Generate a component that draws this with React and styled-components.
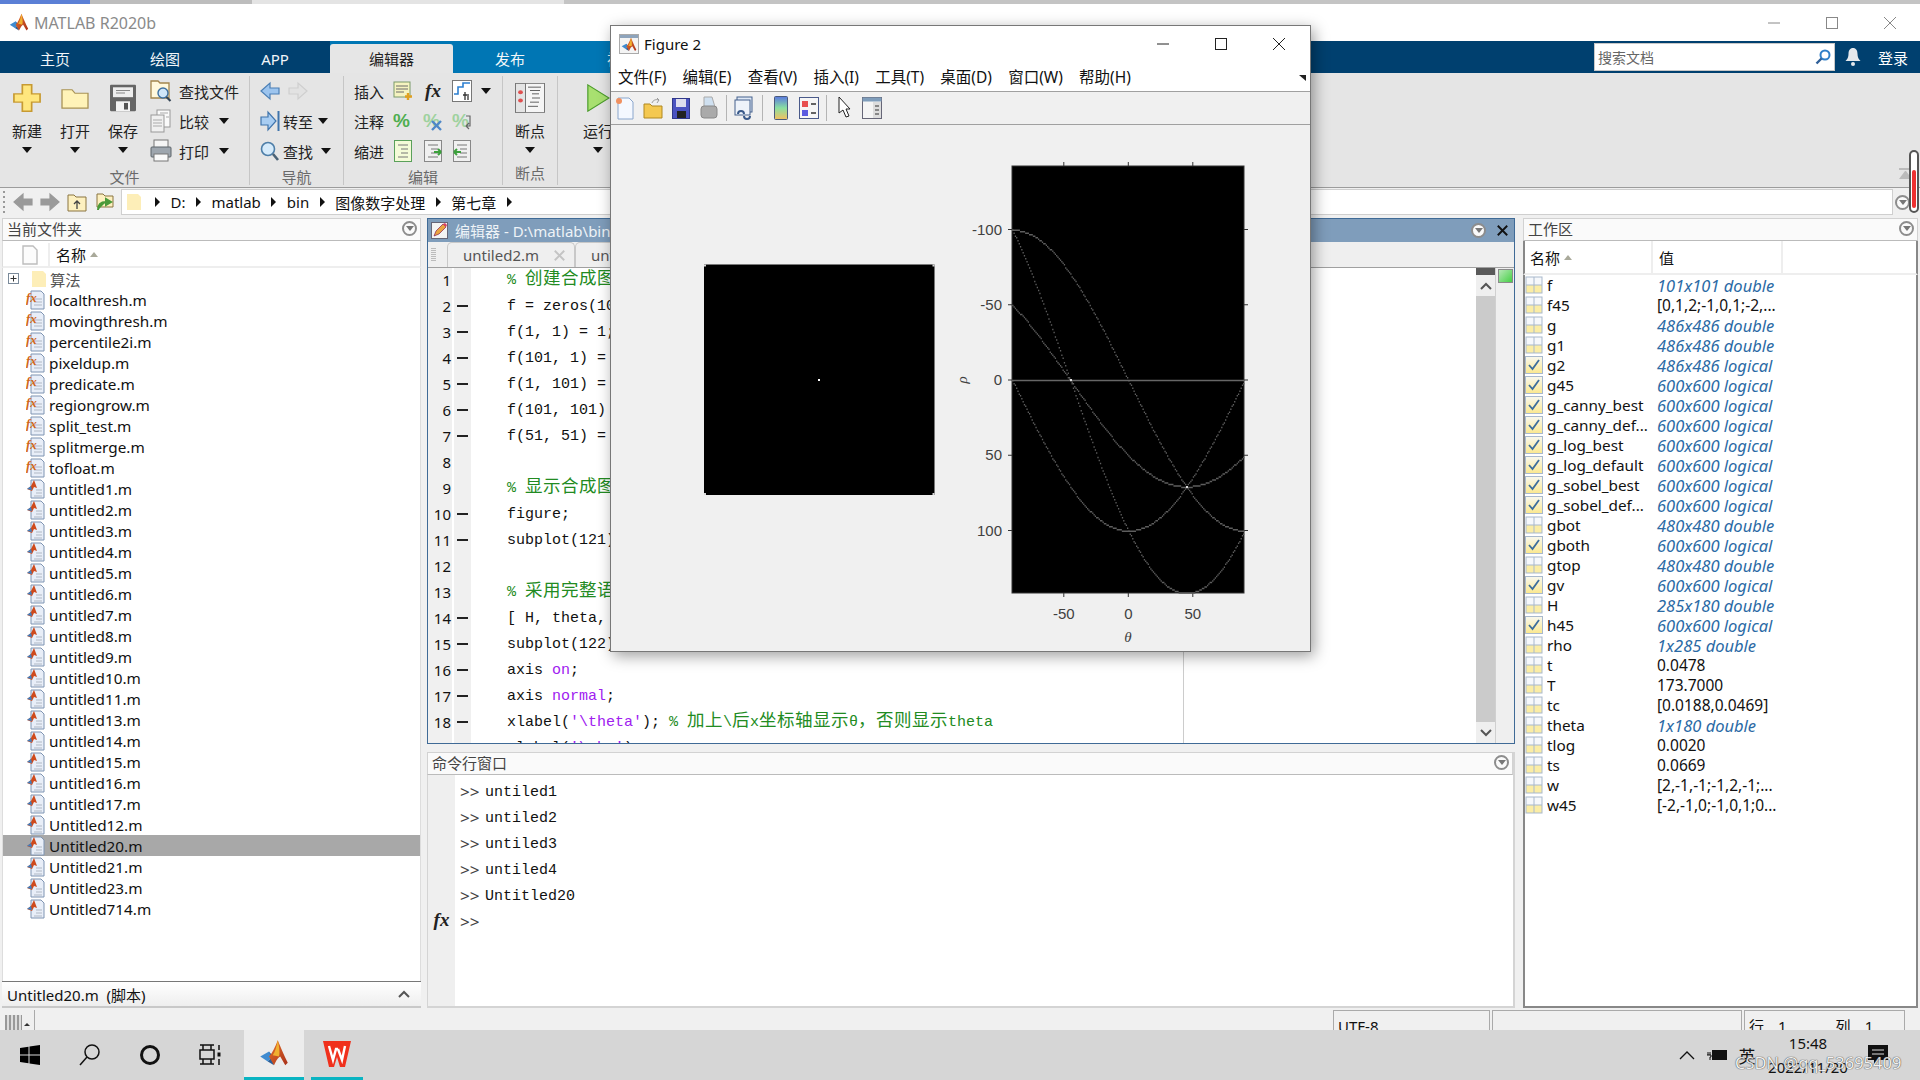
import React from "react";
import styled, { createGlobalStyle } from "styled-components";

const UI = `"Noto Sans", "Noto Sans CJK SC", sans-serif`;
const MONO = `"Liberation Mono", "Noto Sans CJK SC", monospace`;

const GlobalStyle = createGlobalStyle`
  html, body { margin: 0; padding: 0; width: 1920px; height: 1080px; overflow: hidden; }
  body { font-family: ${UI}; font-size: 15px; color: #111; }
  * { box-sizing: border-box; }
`;

const Page = styled.div`
  position: relative;
  width: 1920px;
  height: 1080px;
  display: flex;
  flex-direction: column;
  overflow: hidden;
  background: #f0f0f0;
`;

const BrowserStrip = styled.div`
  height: 4px;
  display: flex;
  background: #c4c4c4;
`;
const StripPart = styled.div`
  width: ${(p) => p.$w}px;
  background: ${(p) => p.$c};
`;

const TitleBar = styled.div`
  height: 37px;
  background: #fff;
  display: flex;
  align-items: center;
  padding-left: 9px;
`;
const TitleText = styled.span`
  margin-left: 5px;
  font-size: 16px;
  color: #8a8a8a;
`;
const WinButtons = styled.div`
  margin-left: auto;
  display: flex;
  padding-right: ${(p) => p.$pr ?? 1}px;
`;
const WinButton = styled.div`
  width: 58px;
  height: 30px;
  display: flex;
  align-items: center;
  justify-content: center;
`;

const TabBar = styled.div`
  height: 32px;
  display: flex;
  background: #00406f;
  padding-right: 5px;
`;
const TabGroup = styled.div`
  display: flex;
  height: 100%;
  width: ${(p) => p.$w}px;
  background: ${(p) => p.$c};
  padding-top: 3px;
`;
const Tab = styled.div`
  width: ${(p) => p.$w || 110}px;
  display: flex;
  align-items: center;
  justify-content: center;
  color: ${(p) => (p.$active ? "#222" : "#f2f6f9")};
  font-size: 15px;
  background: ${(p) => (p.$active ? "#e6e6e6" : "transparent")};
  border-radius: 3px 3px 0 0;
`;
const SearchBox = styled.div`
  margin-left: auto;
  margin-top: 2px;
  width: 241px;
  height: 28px;
  background: #fff;
  border: 1px solid #c8c8c8;
  display: flex;
  align-items: center;
  justify-content: space-between;
  padding: 0 3px 0 3px;
  color: #666;
  font-size: 14px;
`;
const SignIn = styled.div`
  color: #fff;
  font-size: 15px;
  width: 44px;
  display: flex;
  align-items: center;
  justify-content: center;
`;
const BellWrap = styled.div`
  width: 36px;
  display: flex;
  align-items: center;
  justify-content: center;
`;

const Ribbon = styled.div`
  height: 115px;
  display: flex;
  background: #e5e5e5;
  border-bottom: 1px solid #9c9c9c;
`;
const Group = styled.div`
  width: ${(p) => p.$w}px;
  flex: ${(p) => (p.$grow ? 1 : "none")};
  display: flex;
  flex-direction: column;
  border-right: ${(p) => (p.$grow ? "none" : "1px solid #c6c6c6")};
  margin: 3px 0 2px;
`;
const GroupBody = styled.div`
  flex: 1;
  display: flex;
  padding-left: ${(p) => p.$pad || 0}px;
`;
const GroupLabel = styled.div`
  height: 23px;
  text-align: center;
  color: #6a6a6a;
  font-size: 15px;
  line-height: 23px;
`;
const BigButton = styled.div`
  width: ${(p) => p.$w || 48}px;
  display: flex;
  flex-direction: column;
  align-items: center;
  font-size: 15px;
  color: #222;
  padding-top: 2px;
`;
const BigIcon = styled.div`
  height: 40px;
  display: flex;
  align-items: center;
  margin-bottom: 1px;
`;
const BigText = styled.div`
  height: 24px;
  line-height: 24px;
  margin-bottom: 4px;
`;
const RowStack = styled.div`
  display: flex;
  flex-direction: column;
  padding-left: ${(p) => p.$pad || 0}px;
`;
const SmallRow = styled.div`
  height: 30px;
  display: flex;
  align-items: center;
  font-size: 15px;
  color: #222;
  gap: ${(p) => p.$gap ?? 4}px;
`;
const EditRow = styled.div`
  height: 30px;
  display: grid;
  grid-template-columns: 34px 30px 30px 28px 20px;
  align-items: center;
  justify-items: center;
  font-size: 15px;
  color: #222;
  padding-left: 10px;
  & > span:first-child { justify-self: start; white-space: nowrap; }
`;
const Caret = styled.i`
  display: inline-block;
  width: 0;
  height: 0;
  margin-left: ${(p) => p.$ml || 0}px;
  border-left: 5px solid transparent;
  border-right: 5px solid transparent;
  border-top: 6px solid #111;
`;
const CaretRight = styled.i`
  display: inline-block;
  width: 0;
  height: 0;
  border-top: 5px solid transparent;
  border-bottom: 5px solid transparent;
  border-left: 5px solid #111;
`;
const CaretUp = styled.i`
  display: inline-block;
  width: 0;
  height: 0;
  border-left: 4px solid transparent;
  border-right: 4px solid transparent;
  border-bottom: 5px solid #a9a99a;
  margin-left: 4px;
`;

const AddressBar = styled.div`
  height: 28px;
  display: flex;
  align-items: center;
  background: #f0f0f0;
  padding-left: 3px;
`;
const Grip = styled.div`
  width: 2px;
  height: 22px;
  background: repeating-linear-gradient(to bottom, #999 0 2px, transparent 2px 5px);
  margin-right: 8px;
`;
const NavIcons = styled.div`
  display: flex;
  align-items: center;
  gap: 7px;
  width: 108px;
`;
const PathBox = styled.div`
  width: 1772px;
  height: 26px;
  background: #fff;
  border: 1px solid #cfcfcf;
  display: flex;
  align-items: center;
  padding-left: 4px;
  font-size: 15px;
`;
const Crumbs = styled.div`
  display: flex;
  align-items: center;
  margin-left: 13px;
  gap: 10.5px;
`;
const RoundMenu = styled.div`
  width: 15px;
  height: 15px;
  border-radius: 50%;
  border: 2px solid #8d8d8d;
  background: #fafafa;
  display: flex;
  align-items: center;
  justify-content: center;
  flex: none;
  margin-left: ${(p) => p.$ml || 0}px;
  &::after {
    content: "";
    border-left: 4px solid transparent;
    border-right: 4px solid transparent;
    border-top: 5px solid #777;
  }
`;

const Main = styled.div`
  height: 792px;
  display: flex;
  padding: 2px 4px 0 2px;
  gap: 7px;
`;
const SidePanel = styled.div`
  width: ${(p) => p.$w}px;
  flex: none;
  display: flex;
  flex-direction: column;
`;
const PanelHead = styled.div`
  height: 23px;
  flex: none;
  background: #fafafa;
  border: 1px solid #d2d2d2;
  border-bottom: 1px solid #bbb;
  display: flex;
  align-items: center;
  justify-content: space-between;
  padding: 0 3px 2px 4px;
  color: #444;
  font-size: 15px;
`;

const ColumnHead = styled.div`
  height: 27px;
  flex: none;
  display: flex;
  align-items: center;
  background: #fff;
  border-bottom: 2px solid #eee;
  border-left: 1px solid #ddd;
  border-right: 1px solid #ddd;
  padding-top: 2px;
`;
const IconCol = styled.div`
  width: 47px;
  height: 100%;
  display: flex;
  align-items: center;
  justify-content: center;
  padding-left: 8px;
  border-right: 2px solid #eee;
`;
const NameCol = styled.div`
  padding-left: 6px;
  font-size: 15px;
  display: flex;
  align-items: center;
`;
const FileList = styled.div`
  flex: 1;
  background: #fff;
  border-left: 1px solid #ddd;
  border-right: 1px solid #ddd;
  overflow: hidden;
`;
const FileRow = styled.div`
  height: 21px;
  display: flex;
  align-items: center;
  padding-left: ${(p) => (p.$folder ? 5 : 23)}px;
  background: ${(p) => (p.$selected ? "#a8a8a8" : "transparent")};
  color: ${(p) => (p.$folder ? "#555" : "#111")};
  font-size: 15.3px;
  gap: 3px;
`;
const TreeGap = styled.span`
  width: 6px;
`;
const DetailBar = styled.div`
  height: 27px;
  flex: none;
  border-top: 1px solid #777;
  border-bottom: 2px solid #c8c8c8;
  background: linear-gradient(#fff, #eee);
  display: flex;
  align-items: center;
  justify-content: space-between;
  padding: 0 11px 0 5px;
  font-size: 15px;
`;

const MiddleColumn = styled.div`
  width: 1088px;
  flex: none;
  display: flex;
  flex-direction: column;
  margin-left: -1px;
  margin-right: 1px;
`;
const EditorPane = styled.div`
  height: 526px;
  flex: none;
  display: flex;
  flex-direction: column;
  border: 1px solid #3f6a96;
  overflow: hidden;
`;
const EditorHead = styled.div`
  height: 23px;
  flex: none;
  background: #7f9dbb;
  display: flex;
  align-items: center;
  color: #eef3f7;
  font-size: 15px;
  padding-left: 3px;
  gap: 7px;
`;
const EditorHeadRight = styled.div`
  margin-left: auto;
  display: flex;
  align-items: center;
  gap: 11px;
  padding-right: 6px;
`;
const TabStrip = styled.div`
  height: 26px;
  flex: none;
  display: flex;
  align-items: flex-end;
  background: #efefef;
  border-bottom: 1px solid #a0a0a0;
  padding-left: 3px;
`;
const TabGrip = styled.div`
  width: 5px;
  height: 14px;
  margin: 0 11px 5px 0;
  background: repeating-linear-gradient(to bottom, #bbb 0 1px, transparent 1px 2px);
`;
const FileTab = styled.div`
  width: 128px;
  height: 25px;
  display: flex;
  align-items: center;
  justify-content: space-between;
  padding: 0 9px 0 15px;
  border: 1px solid #c8c8c8;
  border-bottom: none;
  border-radius: 5px 5px 0 0;
  color: #555;
  font-size: 15px;
`;
const CodeArea = styled.div`
  flex: 1;
  display: flex;
  background: #fff;
  overflow: hidden;
`;
const LineNumbers = styled.div`
  width: 24px;
  flex: none;
  background: #f0f0f0;
  margin-right: 2px;
  margin-top: -1px;
`;
const LineNo = styled.div`
  height: 26px;
  line-height: 26px;
  text-align: right;
  font-size: 15px;
  padding-right: 1px;
`;
const DashColumn = styled.div`
  width: 17px;
  flex: none;
  background: #f0f0f0;
  margin-top: -1px;
`;
const Dash = styled.div`
  height: 26px;
  display: flex;
  align-items: center;
  justify-content: center;
  &::after {
    content: "";
    display: ${(p) => (p.$on ? "block" : "none")};
    width: 11px;
    height: 1.5px;
    background: #222;
  }
`;
const CodeColumn = styled.div`
  flex: 1;
  position: relative;
  padding-left: 36px;
`;
const CodeLine = styled.div`
  height: 26px;
  line-height: 26px;
  font-family: ${MONO};
  font-size: 15px;
  white-space: pre;
  color: #111;
`;
const Cm = styled.span`
  color: #228b22;
`;
const Zh = styled.span`
  font-family: "Noto Sans CJK SC", sans-serif;
  font-size: 17.5px;
  letter-spacing: 0.5px;
  line-height: 1;
`;
const Str = styled.span`
  color: #a020f0;
`;
const LimitLine = styled.div`
  position: absolute;
  left: 712px;
  top: 0;
  bottom: 0;
  width: 1px;
  background: #ccc;
`;
const ScrollTrack = styled.div`
  width: 20px;
  flex: none;
  background: #efefef;
  display: flex;
  flex-direction: column;
  align-items: center;
  border-right: 1px solid #d0d0d0;
  &::before {
    content: "";
    display: block;
    width: 100%;
    height: 7px;
    background: #5a5a5a;
    flex: none;
  }
`;
const ScrollArrow = styled.div`
  height: 21px;
  flex: none;
  display: flex;
  align-items: center;
  justify-content: center;
`;
const ScrollThumb = styled.div`
  width: 19px;
  flex: 1;
  background: #cbcbcb;
`;
const MarkerColumn = styled.div`
  width: 18px;
  flex: none;
  background: #efefef;
  padding: 1px 1px 0 2px;
`;
const GreenBox = styled.div`
  height: 14px;
  border: 1px solid #8a8a8a;
  background: linear-gradient(135deg, #b6e8b6, #46d046);
`;

const CommandPane = styled.div`
  margin-top: 8px;
  flex: 1;
  display: flex;
  flex-direction: column;
  border-right: 2px solid #d4d4d4;
  border-bottom: 2px solid #d4d4d4;
`;
const CommandBody = styled.div`
  flex: 1;
  display: flex;
  background: #fff;
  border-left: 1px solid #d4d4d4;
`;
const CommandGutter = styled.div`
  width: 27px;
  background: #efefef;
  display: flex;
  align-items: flex-end;
  justify-content: center;
  padding-bottom: 75px;
  font-family: "Liberation Serif", serif;
  font-style: italic;
  font-weight: 700;
  font-size: 19px;
  color: #222;
`;
const CommandLines = styled.div`
  padding: 5px 0 0 5px;
`;
const CommandLine = styled.div`
  height: 26px;
  line-height: 26px;
  font-family: ${MONO};
  font-size: 15px;
  white-space: pre;
  color: #111;
  display: flex;
`;
const Prompt = styled.span`
  width: 25px;
  color: #444;
  font-size: 17px;
  font-family: "Noto Sans", sans-serif;
  line-height: 24px;
`;

const WsHead = styled.div`
  height: 34px;
  flex: none;
  display: flex;
  background: #fff;
  border-left: 2px solid #888;
  border-right: 2px solid #888;
  border-bottom: 2px solid #eee;
  font-size: 15px;
`;
const WsHeadCell = styled.div`
  width: ${(p) => p.$w}px;
  display: flex;
  align-items: center;
  padding-left: ${(p) => p.$pad}px;
  border-right: 2px solid #eee;
`;
const WsList = styled.div`
  flex: 1;
  background: #fff;
  border: 2px solid #888;
  border-top: none;
  overflow: hidden;
`;
const WsRow = styled.div`
  height: 20px;
  display: flex;
  align-items: center;
  font-size: 15.3px;
`;
const WsName = styled.div`
  width: 110px;
  margin-left: 4px;
  white-space: nowrap;
  overflow: hidden;
`;
const WsValue = styled.div`
  white-space: nowrap;
  color: ${(p) => (p.$meta ? "#2b6aa5" : "#111")};
  font-style: ${(p) => (p.$meta ? "italic" : "normal")};
  font-size: ${(p) => (p.$meta ? 16.5 : 15.5)}px;
`;

const StatusBar = styled.div`
  height: 22px;
  display: flex;
  background: #f0f0f0;
  padding: 2px 0 0 5px;
  font-size: 15px;
  overflow: hidden;
`;
const StatusGrip = styled.div`
  width: 17px;
  height: 20px;
  margin-top: 5px;
  background: repeating-linear-gradient(to right, #999 0 2px, #ddd 2px 4px);
`;
const StatusGripEnd = styled.div`
  width: 13px;
  flex: none;
  border-right: 1px solid #aaa;
  display: flex;
  align-items: flex-end;
  justify-content: center;
  padding: 0 3px 4px 0;
  &::after {
    content: "";
    border-left: 3px solid transparent;
    border-right: 3px solid transparent;
    border-bottom: 3px solid #333;
  }
`;
const StatusCell = styled.div`
  width: ${(p) => p.$w}px;
  height: 30px;
  margin-left: ${(p) => p.$ml || 0}px;
  border: 1px solid #aaa;
  border-bottom: none;
  padding-left: 4px;
  display: flex;
  gap: 14px;
  line-height: 30px;
`;
const StatusSpacer = styled.span`
  width: 21px;
`;

const Taskbar = styled.div`
  height: 50px;
  background: #d6d6d6;
  display: flex;
  align-items: center;
`;
const TaskIcon = styled.div`
  width: ${(p) => p.$w || 60}px;
  height: 100%;
  display: flex;
  align-items: center;
  justify-content: center;
  flex: none;
  background: ${(p) => (p.$active ? "#ececec" : "transparent")};
  border-bottom: ${(p) => (p.$open ? "3px solid #0ab4c2" : "none")};
  margin-left: ${(p) => p.$ml || 0}px;
`;
const Tray = styled.div`
  margin-left: auto;
  display: flex;
  align-items: center;
  height: 100%;
`;
const TrayItem = styled.div`
  width: ${(p) => p.$w}px;
  display: flex;
  align-items: center;
  justify-content: center;
  font-size: ${(p) => p.$fs || 15}px;
  color: #111;
`;
const Clock = styled.div`
  width: 92px;
  text-align: center;
  font-size: 15px;
  line-height: 24px;
  color: #111;
`;
const Watermark = styled.div`
  position: absolute;
  left: 1735px;
  top: 1051px;
  font-size: 16.5px;
  color: #f6f6f6;
  opacity: 0.85;
  text-shadow: 0 0 1px #333, 0 0 1px #333;
  white-space: nowrap;
`;
const FloatingPill = styled.div`
  position: absolute;
  left: 1909px;
  top: 150px;
  width: 10px;
  height: 63px;
  border: 2px solid #555;
  border-radius: 5px;
  background: #fff;
  padding-top: 18px;
  display: flex;
  justify-content: center;
  &::after {
    content: "";
    width: 4px;
    height: 38px;
    background: #ee3030;
    border-radius: 2px;
  }
`;
const CollapseArrow = styled.div`
  position: absolute;
  left: 1899px;
  top: 168px;
  width: 13px;
  height: 13px;
  border-top: 2px solid #bbb;
  &::after {
    content: "";
    display: block;
    margin-top: 1px;
    border-left: 6px solid transparent;
    border-right: 6px solid transparent;
    border-bottom: 8px solid #bbb;
  }
`;

const FigureWindow = styled.div`
  position: absolute;
  left: 610px;
  top: 25px;
  width: 701px;
  height: 627px;
  background: #f0f0f0;
  border: 1px solid #777;
  box-shadow: 3px 4px 14px rgba(0, 0, 0, 0.38);
  display: flex;
  flex-direction: column;
`;
const FigTitle = styled.div`
  height: 36px;
  background: #fff;
  display: flex;
  align-items: center;
  padding-left: 8px;
  gap: 5px;
  font-size: 15px;
  flex: none;
`;
const FigLogoFrame = styled.div`
  width: 20px;
  height: 20px;
  border: 1px solid #aaa;
  background: linear-gradient(#8ea4bc 0 3px, #f4f4f4 3px);
  display: flex;
  align-items: flex-end;
  justify-content: center;
`;
const FigMenu = styled.div`
  height: 30px;
  background: #fff;
  display: flex;
  align-items: center;
  padding-left: 7px;
  gap: 16.2px;
  font-size: 15.5px;
  border-bottom: 1px solid #a0a0a0;
  flex: none;
  position: relative;
`;
const DockArrow = styled.div`
  position: absolute;
  right: 4px;
  top: 13px;
  width: 7px;
  height: 6px;
  background: #222;
  clip-path: polygon(0 0, 100% 100%, 100% 0);
`;
const FigTools = styled.div`
  height: 33px;
  flex: none;
  background: #f0f0f0;
  display: flex;
  align-items: center;
  border-bottom: 1px solid #a0a0a0;
`;
const ToolSlot = styled.div`
  width: 28px;
  display: flex;
  justify-content: center;
`;
const ToolSep = styled.div`
  width: 1px;
  height: 26px;
  background: #b4b4b4;
  margin: 0 ${(p) => p.$m || 3}px;
`;
const ChartSvg = styled.svg`
  flex: 1;
  display: block;
  width: 100%;
  min-height: 0;
`;

/* ---------- drawings ---------- */

const Logo = ({ size = 20 }) => (
  <svg width={size} height={size} viewBox="0 0 24 24">
    <defs>
      <linearGradient id="peak" x1="0" y1="0" x2="1" y2="1">
        <stop offset="0" stopColor="#e8742a" />
        <stop offset="1" stopColor="#a9301a" />
      </linearGradient>
    </defs>
    <path d="M1 14 L8 10 L11 14 L7 18 Z" fill="#3f8bd0" />
    <path d="M8 10 L11 14 L7 18 L12 21 Z" fill="#2a5d96" />
    <path d="M15 1 C13 6 11 11 8 14 L12 21 C14 17 15 15 17 14 L21 21 L23 19 C20 13 17 6 15 1 Z" fill="url(#peak)" />
    <path d="M15 1 C14 6 13 10 11 13 L16 14 C17 11 16 5 15 1 Z" fill="#f0b030" />
  </svg>
);

const PlusIcon = () => (
  <svg width="28" height="28" viewBox="0 0 30 34" preserveAspectRatio="none">
    <path d="M10 1h10v11h9v10h-9v11H10V22H1V12h9z" fill="#ffe67e" stroke="#c79a32" strokeWidth="1.8" />
  </svg>
);
const FolderIcon = () => (
  <svg width="28" height="21" viewBox="0 0 28 24" preserveAspectRatio="none">
    <path d="M1 2h10l3 4h13v17H1z" fill="#fff3b8" stroke="#a99356" strokeWidth="1.3" />
  </svg>
);
const SaveIcon = () => (
  <svg width="28" height="28" viewBox="0 0 28 34" preserveAspectRatio="none">
    <rect x="1" y="1" width="26" height="32" rx="1" fill="#666" />
    <rect x="4" y="4" width="20" height="12" fill="#eee" />
    <path d="M7 8h14M7 11h9" stroke="#888" strokeWidth="1.3" />
    <rect x="7" y="21" width="14" height="12" fill="#f4f4f4" />
    <rect x="15" y="23" width="4" height="8" fill="#555" />
  </svg>
);
const FindFileIcon = () => (
  <svg width="22" height="24" viewBox="0 0 22 24">
    <path d="M1 2h7l2 2h9v15H1z" fill="#fff8dc" stroke="#a3854c" strokeWidth="1.3" />
    <circle cx="13" cy="14" r="5" fill="#cfe6f8" stroke="#3d6fa0" strokeWidth="1.4" />
    <path d="M16.500 18l4 4" stroke="#345" strokeWidth="2.2" />
  </svg>
);
const CompareIcon = () => (
  <svg width="22" height="24" viewBox="0 0 22 24">
    <rect x="7" y="1" width="13" height="17" fill="#fafafa" stroke="#999" />
    <rect x="1" y="6" width="13" height="17" fill="#f0f0f0" stroke="#999" />
    <path d="M3 11h9M3 14h9M3 17h9M10 4h8M16 8h3" stroke="#aaa" />
  </svg>
);
const PrintIcon = () => (
  <svg width="22" height="24" viewBox="0 0 22 24">
    <rect x="4" y="1" width="14" height="8" fill="#f5f5f5" stroke="#777" />
    <rect x="1" y="8" width="20" height="10" rx="1" fill="#9ea6ae" stroke="#5d646b" />
    <rect x="4" y="15" width="14" height="7" fill="#fafafa" stroke="#777" />
  </svg>
);
const FlipSvg = styled.svg`
  transform: ${(p) => (p.$flip ? "scaleX(-1)" : "none")};
`;
const ArrowIcon = ({ dir = "left", fill = "#9cc4ee", stroke = "#4b7fb5", size = 20 }) => (
  <FlipSvg width={size} height={size} viewBox="0 0 20 20" $flip={dir === "right"}>
    <path d="M1 10L10 2v5h9v6h-9v5z" fill={fill} stroke={stroke} strokeWidth="1.2" />
  </FlipSvg>
);
const GotoIcon = () => (
  <svg width="20" height="22" viewBox="0 0 20 22">
    <path d="M1 7h7V2l8 9-8 9v-5H1z" fill="#a8cdf2" stroke="#3f74ac" strokeWidth="1.2" />
    <path d="M18.500 1v20" stroke="#3f74ac" strokeWidth="2" />
  </svg>
);
const LensIcon = () => (
  <svg width="20" height="22" viewBox="0 0 20 22">
    <circle cx="8" cy="9" r="6.500" fill="#d6ebfb" stroke="#4d7ea8" strokeWidth="1.6" />
    <path d="M13 14l5 6" stroke="#4a6275" strokeWidth="2.6" />
  </svg>
);
const NoteIcon = () => (
  <svg width="20" height="20" viewBox="0 0 20 20">
    <rect x="1" y="1" width="16" height="15" fill="#f5f3c0" stroke="#7a9a6a" />
    <path d="M3 5h12M3 8h12M3 11h8" stroke="#6a6a6a" />
    <path d="M15 12v7M12 15.500h7" stroke="#e0a020" strokeWidth="2.4" />
  </svg>
);
const FxGlyph = styled.span`
  font-family: "Liberation Serif", serif;
  font-style: italic;
  font-weight: 700;
  font-size: 19px;
  color: #222;
`;
const FlowIcon = () => (
  <svg width="20" height="22" viewBox="0 0 20 22">
    <rect x="0.5" y="0.5" width="19" height="21" fill="#fff" stroke="#777" />
    <path d="M2 14h4V7h5V3h7" stroke="#2d7fd0" strokeWidth="1.6" fill="none" />
    <path d="M13 12v8M11 15h4M16 14v6" stroke="#333" strokeWidth="1.3" fill="none" />
  </svg>
);
const PercentIcon = ({ variant }) => (
  <svg width="20" height="22" viewBox="0 0 20 22">
    <text x="0" y="17" fontFamily="Liberation Sans, sans-serif" fontSize="19" fontWeight="700" fill={variant ? "#9fd29f" : "#4fae4f"}>
      %
    </text>
    {variant === "x" && <path d="M9 11l9 9M18 11l-9 9" stroke="#4f88c8" strokeWidth="2.4" />}
    {variant === "w" && <path d="M14 6h4v10h-4M14 16l3-3M14 16l3 3" stroke="#666" strokeWidth="1.2" fill="none" />}
  </svg>
);
const IndentIcon = ({ variant }) => (
  <svg width="18" height="22" viewBox="0 0 18 22">
    <rect x="0.5" y="0.5" width="17" height="21" fill={variant ? "#f0f0f0" : "#f4fbd8"} stroke={variant ? "#888" : "#5aa05a"} />
    <path d="M4 5h10M7 9h7M7 13h7M4 17h10" stroke="#777" />
    {variant === "l" && <path d="M1 12h7M1 12l3-3M1 12l3 3" stroke="#3ca03c" strokeWidth="2" />}
    {variant === "r" && <path d="M17 12h-7M17 12l-3-3M17 12l-3 3" stroke="#3ca03c" strokeWidth="2" />}
  </svg>
);
const BreakpointIcon = () => (
  <svg width="30" height="30" viewBox="0 0 30 36" preserveAspectRatio="none">
    <rect x="0.5" y="0.5" width="29" height="35" fill="#f5f5f5" stroke="#777" />
    <rect x="0.5" y="0.5" width="10" height="35" fill="#e4e4e4" stroke="#777" />
    <circle cx="5.5" cy="11" r="2.4" fill="#e05050" />
    <circle cx="5.5" cy="21" r="2.4" fill="#e05050" />
    <path d="M13 5h13M15 9h10M17 13h7M17 18h8M15 23h9M13 28h10" stroke="#555" />
  </svg>
);
const RunIcon = () => (
  <svg width="24" height="28" viewBox="0 0 26 34" preserveAspectRatio="none">
    <path d="M2 1l23 16L2 33z" fill="#a8e070" stroke="#4c9c2c" strokeWidth="1.3" />
  </svg>
);
const UpFolderIcon = () => (
  <svg width="20" height="20" viewBox="0 0 20 20">
    <path d="M1 3h6l2 2h10v14H1z" fill="#fdf0c0" stroke="#8a7440" />
    <path d="M10 17V9M7 12l3-3 3 3" stroke="#444" strokeWidth="1.3" fill="none" />
  </svg>
);
const BackFolderIcon = () => (
  <svg width="20" height="20" viewBox="0 0 20 20">
    <path d="M3 2h6l2 2h8v11H3z" fill="#fdf0c0" stroke="#8a7440" />
    <path d="M4 18c0-6 3-8 8-8M12 7v6l5-3z" stroke="#4a9a3a" strokeWidth="2" fill="#4a9a3a" />
  </svg>
);
const PageIcon = () => (
  <svg width="16" height="20" viewBox="0 0 16 20">
    <path d="M1 1h10l4 4v14H1z" fill="#fcfcfc" stroke="#bdbdbd" strokeWidth="1.4" />
  </svg>
);
const TreePlus = () => (
  <svg width="11" height="11" viewBox="0 0 11 11">
    <rect x="0.5" y="0.5" width="10" height="10" fill="#fff" stroke="#7a8a9a" />
    <path d="M2.500 5.500h6M5.500 2.500v6" stroke="#333" />
  </svg>
);
const SmallFolder = () => (
  <svg width="16" height="18" viewBox="0 0 16 18">
    <path d="M1 1h11l3 3v13H1z" fill="#fdeeb8" />
  </svg>
);
const FxFile = () => (
  <svg width="20" height="20" viewBox="0 0 20 20">
    <path d="M5 1h10l3 3v15H5z" fill="#e8eef8" stroke="#7f94b2" />
    <path d="M8 9h8M8 12h8M8 15h8" stroke="#b0b8c4" />
    <text x="0" y="12" fontFamily="Liberation Serif, serif" fontStyle="italic" fontWeight="700" fontSize="13" fill="#d0681c">
      fx
    </text>
  </svg>
);
const ScriptFile = () => (
  <svg width="20" height="20" viewBox="0 0 20 20">
    <path d="M5 1h10l3 3v15H5z" fill="#e8eef8" stroke="#7f94b2" />
    <path d="M10 11h6M10 14h6M8 17h8" stroke="#b0b8c4" />
    <path d="M1 10l4-3 3-6 3 8-3-1-2 4z" fill="#cf4a1c" />
    <path d="M1 10l4-3 1 4z" fill="#3f7fc0" />
  </svg>
);
const GridIcon = () => (
  <svg width="18" height="18" viewBox="0 0 18 18">
    <rect x="0.5" y="0.5" width="17" height="17" fill="#a9b9cc" />
    <rect x="1.5" y="1.5" width="7" height="7" fill="#f6f8fb" />
    <rect x="9.5" y="1.5" width="7" height="7" fill="#f6f8fb" />
    <rect x="1.5" y="9.5" width="7" height="7" fill="#fbeda5" />
    <rect x="9.5" y="9.5" width="7" height="7" fill="#fbeda5" />
  </svg>
);
const CheckIcon = () => (
  <svg width="18" height="18" viewBox="0 0 18 18">
    <defs>
      <linearGradient id="chk" x1="0" y1="0" x2="0" y2="1">
        <stop offset="0" stopColor="#f8f8f0" />
        <stop offset="1" stopColor="#fbe88e" />
      </linearGradient>
    </defs>
    <rect x="0.5" y="0.5" width="17" height="17" fill="url(#chk)" stroke="#a9b9cc" />
    <path d="M4 9l3.500 4L14 4" stroke="#3c6d9c" strokeWidth="1.8" fill="none" />
  </svg>
);
const XMark = ({ size = 14, color = "#888", width = 1 }) => (
  <svg width={size} height={size} viewBox="0 0 14 14">
    <path d="M1 1l12 12M13 1L1 13" stroke={color} strokeWidth={width} />
  </svg>
);
const MinMark = ({ color = "#888" }) => (
  <svg width="14" height="14" viewBox="0 0 14 14">
    <path d="M1 7h12" stroke={color} strokeWidth="1" />
  </svg>
);
const MaxMark = ({ color = "#888" }) => (
  <svg width="14" height="14" viewBox="0 0 14 14">
    <rect x="1.5" y="1.5" width="11" height="11" fill="none" stroke={color} strokeWidth="1" />
  </svg>
);
const Chevron = ({ up, color = "#555" }) => (
  <svg width="12" height="8" viewBox="0 0 12 8">
    <path d={up ? "M1 7l5-5 5 5" : "M1 1l5 5 5-5"} fill="none" stroke={color} strokeWidth="2" />
  </svg>
);
const SearchGlass = () => (
  <svg width="16" height="16" viewBox="0 0 16 16">
    <circle cx="10" cy="6" r="4.500" fill="#fff" stroke="#2f7fc8" strokeWidth="2" />
    <path d="M6.500 9.500L1.500 14.500" stroke="#2f5f98" strokeWidth="2.4" />
  </svg>
);
const Bell = () => (
  <svg width="16" height="20" viewBox="0 0 16 20">
    <path d="M8 1c3 0 4.500 2.500 4.500 6 0 3 1 5 3 7H.5c2-2 3-4 3-7 0-3.500 1.500-6 4.500-6z" fill="#e4e8ec" />
    <circle cx="8" cy="17" r="2" fill="#e4e8ec" />
  </svg>
);
const Pencil = () => (
  <svg width="17" height="17" viewBox="0 0 17 17">
    <rect x="0.5" y="0.5" width="16" height="16" fill="#f4f4f4" stroke="#667" />
    <path d="M3 14l2-5 7-7 3 3-7 7z" fill="#e8a440" stroke="#704" strokeWidth="0.6" />
    <path d="M12 2l3 3 1-2-2-2z" fill="#d84060" />
  </svg>
);
const ColorbarIcon = () => (
  <svg width="14" height="24" viewBox="0 0 14 24">
    <defs>
      <linearGradient id="cbar" x1="0" y1="0" x2="0" y2="1">
        <stop offset="0" stopColor="#5a78e0" />
        <stop offset="0.5" stopColor="#8ae0a0" />
        <stop offset="1" stopColor="#f4c060" />
      </linearGradient>
    </defs>
    <rect x="0.5" y="0.5" width="13" height="23" rx="1" fill="url(#cbar)" stroke="#4a5a7a" />
  </svg>
);
const LegendIcon = () => (
  <svg width="20" height="22" viewBox="0 0 20 22">
    <rect x="0.5" y="0.5" width="19" height="21" fill="#f6f6f6" stroke="#4a5a8a" />
    <rect x="3" y="4" width="6" height="6" fill="#e85050" />
    <rect x="3" y="13" width="6" height="6" fill="#5a5ae0" />
    <path d="M12 7h5M12 16h5" stroke="#333" strokeWidth="1.5" />
  </svg>
);
const NewFileIcon = () => (
  <svg width="20" height="24" viewBox="0 0 20 24">
    <path d="M3 2h11l4 4v17H3z" fill="#f4f8ff" stroke="#8aa6cc" />
    <circle cx="4" cy="5" r="3" fill="#f09060" />
  </svg>
);
const OpenIcon = () => (
  <svg width="20" height="22" viewBox="0 0 20 22">
    <path d="M1 7h6l2 2h10v12H1z" fill="#f4c850" stroke="#b08820" />
    <path d="M9 6c1-3 4-4 7-3M14 1l2 2-2 3" stroke="#999" fill="none" />
  </svg>
);
const FloppyIcon = () => (
  <svg width="18" height="22" viewBox="0 0 18 22">
    <rect x="0.5" y="1.5" width="17" height="20" fill="#4a52c0" stroke="#30388a" />
    <rect x="4" y="2" width="10" height="8" fill="#dde" />
    <rect x="5" y="14" width="9" height="7" fill="#222" />
  </svg>
);
const GreyPrintIcon = () => (
  <svg width="18" height="24" viewBox="0 0 18 24">
    <path d="M4 1h8l3 10H4z" fill="#cfe0f0" stroke="#aaa" />
    <rect x="1" y="10" width="16" height="12" rx="3" fill="#aaa" stroke="#888" />
  </svg>
);
const LinkIcon = () => (
  <svg width="20" height="24" viewBox="0 0 20 24">
    <rect x="3" y="1" width="15" height="15" fill="#dfe8f6" stroke="#44608c" />
    <rect x="1" y="4" width="15" height="15" fill="#eef3fa" stroke="#44608c" />
    <path d="M4 18a3 3 0 016 0M10 20a3 3 0 006 0" stroke="#3a5a8a" strokeWidth="2" fill="none" />
  </svg>
);
const PointerIcon = () => (
  <svg width="14" height="24" viewBox="0 0 14 24">
    <path d="M2 1v16l4-3 3 7 3-1-3-7h4z" fill="#fff" stroke="#222" />
  </svg>
);
const PanelIcon = () => (
  <svg width="20" height="22" viewBox="0 0 20 22">
    <rect x="0.5" y="0.5" width="19" height="21" fill="#f5f5f5" stroke="#667" />
    <rect x="0.5" y="0.5" width="19" height="4" fill="#7f9dbb" />
    <rect x="11" y="5" width="8" height="16" fill="#ddd" />
    <path d="M13 9h4M13 13h4M13 17h4" stroke="#333" />
  </svg>
);
const WindowsLogo = () => (
  <svg width="20" height="20" viewBox="0 0 20 20">
    <path d="M0 3l8.500-1.200V9.500H0zM9.500 1.600L20 0v9.500H9.500zM0 10.500h8.500v7.700L0 17zM9.500 10.500H20V20L9.500 18.400z" fill="#000" />
  </svg>
);
const TaskSearch = () => (
  <svg width="22" height="24" viewBox="0 0 22 24">
    <circle cx="13" cy="9" r="7" fill="none" stroke="#111" strokeWidth="1.5" />
    <path d="M8 14L1 22" stroke="#111" strokeWidth="1.5" />
  </svg>
);
const CortanaRing = () => (
  <svg width="22" height="22" viewBox="0 0 22 22">
    <circle cx="11" cy="11" r="8.500" fill="none" stroke="#111" strokeWidth="3" />
  </svg>
);
const TaskView = () => (
  <svg width="22" height="22" viewBox="0 0 22 22">
    <path d="M1 1h14M1 6h14v9H1zM1 20h14M4 1v5M12 1v5M4 15v5M12 15v5M20 1v5M20 15v6" stroke="#111" strokeWidth="1.5" fill="none" />
    <rect x="18.500" y="8.500" width="3" height="4" fill="#111" />
  </svg>
);
const WpsLogo = () => (
  <svg width="32" height="30" viewBox="0 0 32 30">
    <path d="M2 2h28l-6 26h-5l-3-10-3 10H8z" fill="#f0301c" />
    <path d="M8 7l4 14 3-11h2M24 7l-3 14-4-11" fill="none" stroke="#fff" strokeWidth="2.4" />
  </svg>
);
const BatteryIcon = () => (
  <svg width="20" height="14" viewBox="0 0 20 14">
    <rect x="5.500" y="2.500" width="14" height="9" fill="#111" stroke="#111" />
    <path d="M1 4v3M3 4v3M0 7h4v2H3v3" stroke="#111" fill="none" />
  </svg>
);
const TrayUp = () => (
  <svg width="16" height="10" viewBox="0 0 16 10">
    <path d="M1 9l7-7 7 7" fill="none" stroke="#111" strokeWidth="1.3" />
  </svg>
);
const NotifyIcon = () => (
  <svg width="20" height="20" viewBox="0 0 20 20">
    <path d="M0 0h20v15H10l-4 4v-4H0z" fill="#111" />
    <path d="M4 5h12M4 9h12" stroke="#ddd" />
  </svg>
);

/* ---------- data ---------- */

const files = [
  ["localthresh.m", "fx"], ["movingthresh.m", "fx"], ["percentile2i.m", "fx"], ["pixeldup.m", "fx"],
  ["predicate.m", "fx"], ["regiongrow.m", "fx"], ["split_test.m", "fx"], ["splitmerge.m", "fx"], ["tofloat.m", "fx"],
  ...[1, 2, 3, 4, 5, 6, 7, 8, 9, 10, 11, 13, 14, 15, 16, 17].map((n) => [`untitled${n}.m`, "s"]),
  ...[12, 20, 21, 23, 714].map((n) => [`Untitled${n}.m`, "s"]),
];

const vars = [
  ["f", "101x101 double", "g", 1], ["f45", "[0,1,2;-1,0,1;-2,...", "g", 0], ["g", "486x486 double", "g", 1],
  ["g1", "486x486 double", "g", 1], ["g2", "486x486 logical", "c", 1], ["g45", "600x600 logical", "c", 1],
  ["g_canny_best", "600x600 logical", "c", 1], ["g_canny_def...", "600x600 logical", "c", 1],
  ["g_log_best", "600x600 logical", "c", 1], ["g_log_default", "600x600 logical", "c", 1],
  ["g_sobel_best", "600x600 logical", "c", 1], ["g_sobel_def...", "600x600 logical", "c", 1],
  ["gbot", "480x480 double", "g", 1], ["gboth", "600x600 logical", "c", 1], ["gtop", "480x480 double", "g", 1],
  ["gv", "600x600 logical", "c", 1], ["H", "285x180 double", "g", 1], ["h45", "600x600 logical", "c", 1],
  ["rho", "1x285 double", "g", 1], ["t", "0.0478", "g", 0], ["T", "173.7000", "g", 0],
  ["tc", "[0.0188,0.0469]", "g", 0], ["theta", "1x180 double", "g", 1], ["tlog", "0.0020", "g", 0],
  ["ts", "0.0669", "g", 0], ["w", "[2,-1,-1;-1,2,-1;...", "g", 0], ["w45", "[-2,-1,0;-1,0,1;0...", "g", 0],
];

const code = [
  [1, 0, <Cm>% <Zh>创建合成图像</Zh></Cm>],
  [2, 1, "f = zeros(101, 101);"],
  [3, 1, "f(1, 1) = 1;"],
  [4, 1, "f(101, 1) = 1;"],
  [5, 1, "f(1, 101) = 1;"],
  [6, 1, "f(101, 101) = 1;"],
  [7, 1, "f(51, 51) = 1;"],
  [8, 0, ""],
  [9, 0, <Cm>% <Zh>显示合成图像</Zh></Cm>],
  [10, 1, "figure;"],
  [11, 1, "subplot(121), imshow(f);"],
  [12, 0, ""],
  [13, 0, <Cm>% <Zh>采用完整语法</Zh></Cm>],
  [14, 1, "[ H, theta, rho ] = hough(f);"],
  [15, 1, "subplot(122), imshow(H);"],
  [16, 1, <>axis <Str>on</Str>;</>],
  [17, 1, <>axis <Str>normal</Str>;</>],
  [18, 1, <>xlabel(<Str>'\theta'</Str>); <Cm>% <Zh>加上</Zh>\<Zh>后</Zh>x<Zh>坐标轴显示</Zh>θ<Zh>，否则显示</Zh>theta</Cm></>],
  [19, 1, <>ylabel(<Str>'\rho'</Str>);</>],
];

const commands = ["untiled1", "untiled2", "untiled3", "untiled4", "Untitled20", ""];

const menu = ["文件(F)", "编辑(E)", "查看(V)", "插入(I)", "工具(T)", "桌面(D)", "窗口(W)", "帮助(H)"];

const px = (t) => 1128.3 + t * 1.29;
const py = (r) => 380 + r * 1.505;
// one accumulator cell per theta column, so steep parts come out dotted
const curve = (a, b) => {
  let d = "";
  for (let t = -90; t <= 89; t += 1) {
    const rad = (t * Math.PI) / 180;
    const r = Math.round(a * Math.cos(rad) + b * Math.sin(rad));
    d += `M${px(t).toFixed(2)} ${py(r).toFixed(2)}h1.29v1.5h-1.29z`;
  }
  return d;
};

const HoughChart = () => (
  <ChartSvg viewBox="611 125 699 525" preserveAspectRatio="xMinYMin meet">
    <rect x="704" y="264.500" width="230.500" height="230.500" fill="#000" />
    <rect x="818" y="379" width="2" height="2" fill="#fff" />
    <path d="M704 264.500h2v2h-2zM932.500 264.500h2v2h-2zM704 493h2v2h-2zM932.500 493h2v2h-2z" fill="#d8d8d8" />
    <rect x="1012" y="166" width="232" height="427" fill="#000" stroke="#333" />
    {[-50, 0, 50].map((t) => (
      <g key={t}>
        <path d={`M${px(t)} 162V166M${px(t)} 593V597`} stroke="#333" />
        <text x={px(t)} y="619" textAnchor="middle" fontFamily="Liberation Sans, sans-serif" fontSize="15" fill="#404040">{t}</text>
      </g>
    ))}
    {[-100, -50, 0, 50, 100].map((r) => (
      <g key={r}>
        <path d={`M1008 ${py(r)}H1012M1244 ${py(r)}H1248`} stroke="#333" />
        <text x="1002" y={py(r) + 5} textAnchor="end" fontFamily="Liberation Sans, sans-serif" fontSize="15" fill="#404040">{r}</text>
      </g>
    ))}
    <g fill="#5e5e5e">
      <path d={curve(100, 0)} />
      <path d={curve(0, 100)} />
      <path d={curve(100, 100)} />
      <path d={curve(50, 50)} />
    </g>
    <path d="M1012 380.500H1244" stroke="#666" strokeWidth="1.6" />
    <rect x="1070" y="379" width="2" height="2" fill="#ddd" />
    <rect x="1186" y="486" width="2" height="2" fill="#ddd" />
    <text x="1128" y="642" textAnchor="middle" fontFamily="Liberation Serif, serif" fontStyle="italic" fontSize="15" fill="#404040">θ</text>
    <text x="0" y="0" transform="translate(967 380) rotate(-90)" textAnchor="middle" fontFamily="Liberation Serif, serif" fontStyle="italic" fontSize="15" fill="#404040">ρ</text>
  </ChartSvg>
);

const App = () => (
  <Page>
    <GlobalStyle />
    <BrowserStrip>
      <StripPart $w={90} $c="#5b7fd6" />
      <StripPart $w={162} $c="#bdbdbd" />
      <StripPart $w={312} $c="#e4e4e4" />
    </BrowserStrip>

    <TitleBar>
      <Logo />
      <TitleText>MATLAB R2020b</TitleText>
      <WinButtons>
        <WinButton><MinMark /></WinButton>
        <WinButton><MaxMark /></WinButton>
        <WinButton><XMark /></WinButton>
      </WinButtons>
    </TitleBar>

    <TabBar>
      <TabGroup $w={330} $c="#00406f">
        <Tab>主页</Tab>
        <Tab>绘图</Tab>
        <Tab>APP</Tab>
      </TabGroup>
      <TabGroup $w={400} $c="#0076b4">
        <Tab $w={123} $active>编辑器</Tab>
        <Tab $w={114}>发布</Tab>
        <Tab>视图</Tab>
      </TabGroup>
      <SearchBox>
        搜索文档
        <SearchGlass />
      </SearchBox>
      <BellWrap><Bell /></BellWrap>
      <SignIn>登录</SignIn>
    </TabBar>

    <Ribbon>
      <Group $w={250}>
        <GroupBody $pad={3}>
          <BigButton><BigIcon><PlusIcon /></BigIcon><BigText>新建</BigText><Caret /></BigButton>
          <BigButton><BigIcon><FolderIcon /></BigIcon><BigText>打开</BigText><Caret /></BigButton>
          <BigButton><BigIcon><SaveIcon /></BigIcon><BigText>保存</BigText><Caret /></BigButton>
          <RowStack $pad={3}>
            <SmallRow $gap={7}><FindFileIcon />查找文件</SmallRow>
            <SmallRow $gap={7}><CompareIcon />比较<Caret $ml={3} /></SmallRow>
            <SmallRow $gap={7}><PrintIcon />打印<Caret $ml={3} /></SmallRow>
          </RowStack>
        </GroupBody>
        <GroupLabel>文件</GroupLabel>
      </Group>
      <Group $w={94}>
        <GroupBody>
          <RowStack $pad={10}>
            <SmallRow $gap={8}><ArrowIcon /><ArrowIcon dir="right" fill="#e2e2e2" stroke="#cfcfcf" /></SmallRow>
            <SmallRow $gap={3}><GotoIcon />转至<Caret $ml={2} /></SmallRow>
            <SmallRow $gap={3}><LensIcon />查找<Caret $ml={5} /></SmallRow>
          </RowStack>
        </GroupBody>
        <GroupLabel>导航</GroupLabel>
      </Group>
      <Group $w={159}>
        <GroupBody>
          <RowStack>
            <EditRow><span>插入</span><NoteIcon /><FxGlyph>fx</FxGlyph><FlowIcon /><Caret /></EditRow>
            <EditRow><span>注释</span><PercentIcon /><PercentIcon variant="x" /><PercentIcon variant="w" /></EditRow>
            <EditRow><span>缩进</span><IndentIcon /><IndentIcon variant="r" /><IndentIcon variant="l" /></EditRow>
          </RowStack>
        </GroupBody>
        <GroupLabel>编辑</GroupLabel>
      </Group>
      <Group $w={55}>
        <GroupBody>
          <BigButton $w={55}><BigIcon><BreakpointIcon /></BigIcon><BigText>断点</BigText><Caret /></BigButton>
        </GroupBody>
        <GroupLabel>断点</GroupLabel>
      </Group>
      <Group $grow>
        <GroupBody $pad={14}>
          <BigButton $w={52}><BigIcon><RunIcon /></BigIcon><BigText>运行</BigText><Caret /></BigButton>
        </GroupBody>
      </Group>
    </Ribbon>

    <AddressBar>
      <Grip />
      <NavIcons>
        <ArrowIcon fill="#9a9a9a" stroke="#9a9a9a" />
        <ArrowIcon dir="right" fill="#9a9a9a" stroke="#9a9a9a" />
        <UpFolderIcon />
        <BackFolderIcon />
      </NavIcons>
      <PathBox>
        <SmallFolder />
        <Crumbs>
          <CaretRight />D:
          <CaretRight />matlab
          <CaretRight />bin
          <CaretRight />图像数字处理
          <CaretRight />第七章
          <CaretRight />
        </Crumbs>
      </PathBox>
      <RoundMenu $ml={2} />
    </AddressBar>

    <Main>
      <SidePanel $w={419}>
        <PanelHead>当前文件夹<RoundMenu /></PanelHead>
        <ColumnHead>
          <IconCol><PageIcon /></IconCol>
          <NameCol>名称<CaretUp /></NameCol>
        </ColumnHead>
        <FileList>
          <FileRow $folder>
            <TreePlus />
            <TreeGap />
            <SmallFolder />
            算法
          </FileRow>
          {files.map(([name, kind]) => (
            <FileRow key={name} $selected={name === "Untitled20.m"}>
              {kind === "fx" ? <FxFile /> : <ScriptFile />}
              {name}
            </FileRow>
          ))}
        </FileList>
        <DetailBar>
          Untitled20.m&nbsp;&nbsp;(脚本)
          <Chevron up />
        </DetailBar>
      </SidePanel>

      <MiddleColumn>
        <EditorPane>
          <EditorHead>
            <Pencil />
            编辑器 - D:\matlab\bin\图像数字处理\第七章\Untitled20.m
            <EditorHeadRight>
              <RoundMenu />
              <XMark size={11} color="#111" width={2.4} />
            </EditorHeadRight>
          </EditorHead>
          <TabStrip>
            <TabGrip />
            <FileTab>untiled2.m<XMark size={11} color="#c4c4c4" width={2.4} /></FileTab>
            <FileTab>untiled3.m<XMark size={11} color="#c4c4c4" width={2.4} /></FileTab>
          </TabStrip>
          <CodeArea>
            <LineNumbers>
              {code.map(([n]) => <LineNo key={n}>{n}</LineNo>)}
            </LineNumbers>
            <DashColumn>
              {code.map(([n, on]) => <Dash key={n} $on={on} />)}
            </DashColumn>
            <CodeColumn>
              {code.map(([n, , text]) => <CodeLine key={n}>{text}</CodeLine>)}
              <LimitLine />
            </CodeColumn>
            <ScrollTrack>
              <ScrollArrow><Chevron up /></ScrollArrow>
              <ScrollThumb />
              <ScrollArrow><Chevron /></ScrollArrow>
            </ScrollTrack>
            <MarkerColumn><GreenBox /></MarkerColumn>
          </CodeArea>
        </EditorPane>

        <CommandPane>
          <PanelHead>命令行窗口<RoundMenu /></PanelHead>
          <CommandBody>
            <CommandGutter>fx</CommandGutter>
            <CommandLines>
              {commands.map((c, i) => (
                <CommandLine key={i}><Prompt>&gt;&gt;</Prompt>{c}</CommandLine>
              ))}
            </CommandLines>
          </CommandBody>
        </CommandPane>
      </MiddleColumn>

      <SidePanel $w={395}>
        <PanelHead>工作区<RoundMenu /></PanelHead>
        <WsHead>
          <WsHeadCell $w={128} $pad={5}>名称<CaretUp /></WsHeadCell>
          <WsHeadCell $w={130} $pad={6}>值</WsHeadCell>
        </WsHead>
        <WsList>
          {vars.map(([name, value, icon, meta]) => (
            <WsRow key={name}>
              {icon === "g" ? <GridIcon /> : <CheckIcon />}
              <WsName>{name}</WsName>
              <WsValue $meta={meta}>{value}</WsValue>
            </WsRow>
          ))}
        </WsList>
      </SidePanel>
    </Main>

    <StatusBar>
      <StatusGrip />
      <StatusGripEnd />
      <StatusCell $w={157} $ml={1298}>UTF-8</StatusCell>
      <StatusCell $w={250} $ml={2} />
      <StatusCell $w={161} $ml={2}>行<span>1</span><StatusSpacer />列<span>1</span></StatusCell>
    </StatusBar>

    <Taskbar>
      <TaskIcon><WindowsLogo /></TaskIcon>
      <TaskIcon><TaskSearch /></TaskIcon>
      <TaskIcon><CortanaRing /></TaskIcon>
      <TaskIcon><TaskView /></TaskIcon>
      <TaskIcon $ml={4} $active $open><Logo size={30} /></TaskIcon>
      <TaskIcon $w={52} $ml={7} $open><WpsLogo /></TaskIcon>
      <Tray>
        <TrayItem $w={30}><TrayUp /></TrayItem>
        <TrayItem $w={30}><BatteryIcon /></TrayItem>
        <TrayItem $w={30} $fs={17}>英</TrayItem>
        <Clock>15:48<br />2022/11/20</Clock>
        <TrayItem $w={48}><NotifyIcon /></TrayItem>
        <TrayItem $w={18} />
      </Tray>
    </Taskbar>

    <CollapseArrow />
    <FloatingPill />
    <Watermark>CSDN @qq_53695409</Watermark>

    <FigureWindow>
      <FigTitle>
        <FigLogoFrame><Logo size={16} /></FigLogoFrame>
        Figure 2
        <WinButtons $pr={2}>
          <WinButton><MinMark color="#222" /></WinButton>
          <WinButton><MaxMark color="#222" /></WinButton>
          <WinButton><XMark color="#222" /></WinButton>
        </WinButtons>
      </FigTitle>
      <FigMenu>
        {menu.map((m) => <span key={m}>{m}</span>)}
        <DockArrow />
      </FigMenu>
      <FigTools>
        <ToolSlot><NewFileIcon /></ToolSlot>
        <ToolSlot><OpenIcon /></ToolSlot>
        <ToolSlot><FloppyIcon /></ToolSlot>
        <ToolSlot><GreyPrintIcon /></ToolSlot>
        <ToolSep />
        <ToolSlot><LinkIcon /></ToolSlot>
        <ToolSep $m={4} />
        <ToolSlot><ColorbarIcon /></ToolSlot>
        <ToolSlot><LegendIcon /></ToolSlot>
        <ToolSep />
        <ToolSlot><PointerIcon /></ToolSlot>
        <ToolSlot><PanelIcon /></ToolSlot>
      </FigTools>
      <HoughChart />
    </FigureWindow>
  </Page>
);

export default App;
